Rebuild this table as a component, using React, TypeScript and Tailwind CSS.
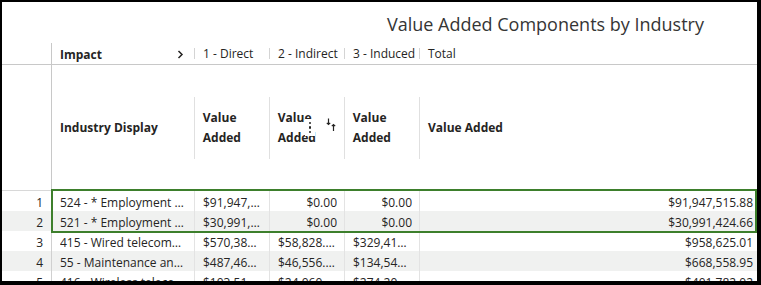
import React from "react";

const rows = [
  {
    n: 1,
    ind: "524 - * Employment and payroll of federal govt, non-military",
    d: "$91,947,515.88",
    i: "$0.00",
    u: "$0.00",
    t: "$91,947,515.88",
  },
  {
    n: 2,
    ind: "521 - * Employment and payroll of state govt, non-education",
    d: "$30,991,424.66",
    i: "$0.00",
    u: "$0.00",
    t: "$30,991,424.66",
  },
  {
    n: 3,
    ind: "415 - Wired telecommunications carriers",
    d: "$570,382.49",
    i: "$58,828.40",
    u: "$329,414.12",
    t: "$958,625.01",
  },
  {
    n: 4,
    ind: "55 - Maintenance and repair construction of nonresidential structures",
    d: "$487,461.45",
    i: "$46,556.30",
    u: "$134,541.20",
    t: "$668,558.95",
  },
  {
    n: 5,
    ind: "416 - Wireless telecommunications carriers (except satellite)",
    d: "$103,517.88",
    i: "$24,060.11",
    u: "$274,204.03",
    t: "$401,782.02",
  },
];

function HeadCell1({ label }: { label: string }) {
  return (
    <div className="w-[75px] flex items-center shrink-0">
      <div className="w-px h-[11px] bg-[#d4d4d4]" />
      <span className="pl-[8px] whitespace-nowrap">{label}</span>
    </div>
  );
}

function HeadCell2({ children, extra }: { children: React.ReactNode; extra?: React.ReactNode }) {
  return (
    <div className="w-[75px] flex items-center shrink-0 relative">
      <div className="w-px h-[62px] bg-[#e0e0e0]" />
      <div className="pl-[8px] pr-[6px] leading-[20px] font-bold">{children}</div>
      {extra}
    </div>
  );
}

export default function App() {
  return (
    <div
      className="w-[761px] h-[285px] bg-black pt-[2px] pl-[2px] pr-[4px] pb-[4px]"
      style={{ fontFamily: '"Open Sans", "Noto Sans", sans-serif' }}
    >
      <div className="bg-white w-full h-full overflow-hidden flex flex-col text-[12px] text-[#252423]">
        {/* Title */}
        <div className="h-[41px] shrink-0 flex items-center justify-end pr-[53px] pt-[3px]">
          <span className="text-[18px] text-[#353535]">Value Added Components by Industry</span>
        </div>

        {/* Header row 1 */}
        <div className="h-[22px] shrink-0 flex border-b border-[#c8c8c8]">
          <div className="w-[50px] shrink-0 border-r border-[#c8c8c8]" />
          <div className="w-[142px] shrink-0 flex items-center justify-between pl-[8px] pr-[10px]">
            <span className="font-bold mt-[3px]">Impact</span>
            <svg width="7" height="9" viewBox="0 0 7 9" className="mt-[2px]">
              <path d="M1.5 1 L5 4.5 L1.5 8" fill="none" stroke="#252423" strokeWidth="1.5" />
            </svg>
          </div>
          <HeadCell1 label="1 - Direct" />
          <HeadCell1 label="2 - Indirect" />
          <HeadCell1 label="3 - Induced" />
          <div className="flex-1 flex items-center">
            <div className="w-px h-[11px] bg-[#d4d4d4]" />
            <span className="pl-[8px]">Total</span>
          </div>
        </div>

        {/* Header row 2 */}
        <div className="h-[126px] shrink-0 flex border-b border-[#d8d8d8]">
          <div className="w-[50px] shrink-0 border-r border-[#c8c8c8]" />
          <div className="w-[142px] shrink-0 flex items-center pl-[8px] font-bold">Industry Display</div>
          <HeadCell2>Value Added</HeadCell2>
          <HeadCell2
            extra={
              <>
                <div className="absolute left-[36px] top-[54px] w-[10px] h-[17px] bg-white flex flex-col items-center justify-center gap-[2px]">
                  <div className="w-[2.5px] h-[2.5px] bg-[#252423] rounded-full" />
                  <div className="w-[2.5px] h-[2.5px] bg-[#252423] rounded-full" />
                  <div className="w-[2.5px] h-[2.5px] bg-[#252423] rounded-full" />
                </div>
                <svg width="10" height="14" viewBox="0 0 10 14" className="absolute left-[57px] top-[53px]">
                  <path d="M2.5 0.5 V6.5 M0.8 4.8 L2.5 6.5 L4.2 4.8" fill="none" stroke="#252423" strokeWidth="1.2" />
                  <path d="M7.5 13 V6.5 M5.8 8.2 L7.5 6.5 L9.2 8.2" fill="none" stroke="#252423" strokeWidth="1.2" />
                </svg>
              </>
            }
          >
            Value Added
          </HeadCell2>
          <HeadCell2>Value Added</HeadCell2>
          <div className="flex-1 flex items-center">
            <div className="w-px h-[62px] bg-[#e0e0e0]" />
            <span className="pl-[8px] font-bold">Value Added</span>
          </div>
        </div>

        {/* Body */}
        <div className="relative flex-1">
          {rows.map((r, idx) => (
            <div
              key={r.n}
              className={`h-[20px] flex items-center ${idx % 2 === 1 ? "bg-[#f0f1f0]" : "bg-white"}`}
            >
              <div className="w-[50px] h-full shrink-0 border-r border-[#d0d0d0] flex items-center justify-end pr-[8px] pt-[3px]">
                {r.n}
              </div>
              <div className="w-[142px] h-full shrink-0 flex items-center pl-[8px] pr-[8px] min-w-0 pt-[3px]">
                <span className="truncate">{r.ind}</span>
              </div>
              {[r.d, r.i, r.u].map((v, k) => (
                <div
                  key={k}
                  className="w-[75px] h-full shrink-0 border-l border-[#e3e3e3] flex items-center pl-[8px] pr-[7px] min-w-0 pt-[3px]"
                >
                  <span className="truncate w-full text-right">{v}</span>
                </div>
              ))}
              <div className="flex-1 h-full border-l border-[#e3e3e3] flex items-center justify-end pr-[4px] pt-[3px]">
                {r.t}
              </div>
            </div>
          ))}
          <div className="absolute left-[49px] right-0 top-[-2px] h-[44px] border-2 border-[#3d7f2c]" />
        </div>
      </div>
    </div>
  );
}
